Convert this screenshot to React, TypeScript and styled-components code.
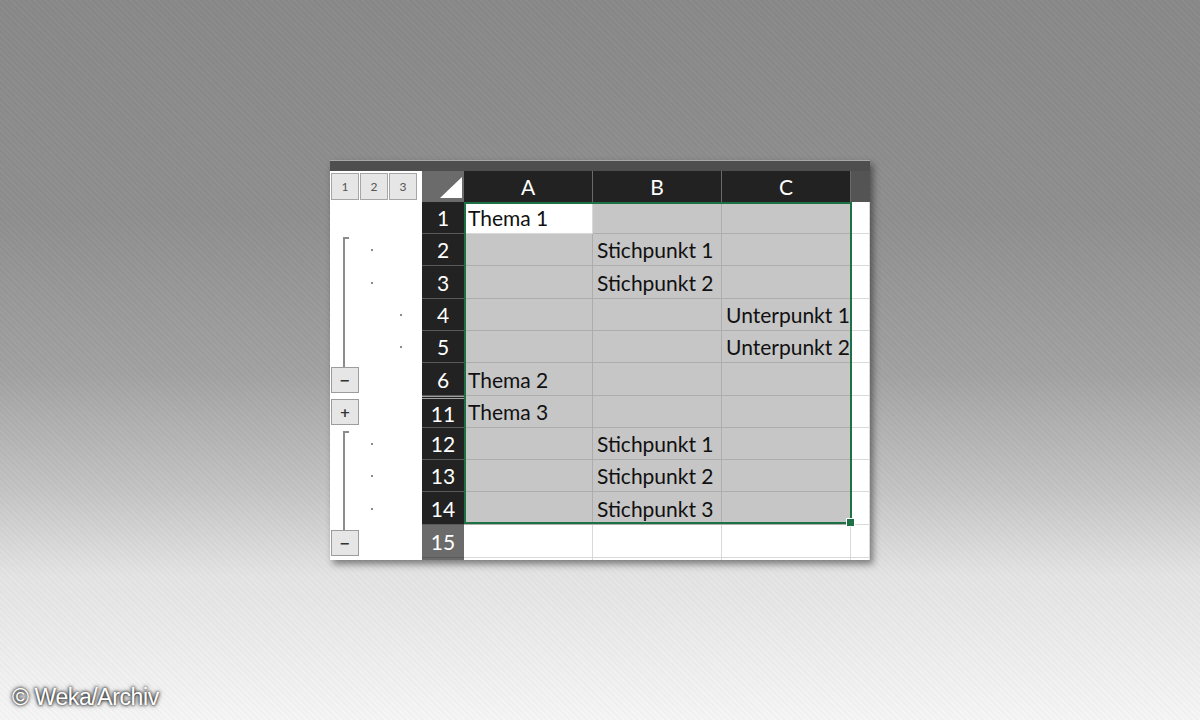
import React from 'react';
import styled, { createGlobalStyle } from 'styled-components';

type Line = 'none' | 'start' | 'full' | 'toButton';

interface SheetRow {
  n: number;
  h: number;
  a?: string;
  b?: string;
  c?: string;
  line: Line;
  dot?: 2 | 3;
  button?: string;
  buttonTop?: number;
  selected: boolean;
  afterHidden?: boolean;
  label?: boolean;
}

const rows: SheetRow[] = [
  { n: 1, h: 32, a: 'Thema 1', line: 'none', selected: true },
  { n: 2, h: 32, b: 'Stichpunkt 1', line: 'start', dot: 2, selected: true },
  { n: 3, h: 33, b: 'Stichpunkt 2', line: 'full', dot: 2, selected: true },
  { n: 4, h: 32, c: 'Unterpunkt 1', line: 'full', dot: 3, selected: true },
  { n: 5, h: 32, c: 'Unterpunkt 2', line: 'full', dot: 3, selected: true },
  { n: 6, h: 33, a: 'Thema 2', line: 'toButton', button: '−', buttonTop: 4, selected: true },
  { n: 11, h: 32, a: 'Thema 3', line: 'none', button: '+', buttonTop: 3, selected: true, afterHidden: true },
  { n: 12, h: 32, b: 'Stichpunkt 1', line: 'start', dot: 2, selected: true },
  { n: 13, h: 32, b: 'Stichpunkt 2', line: 'full', dot: 2, selected: true },
  { n: 14, h: 33, b: 'Stichpunkt 3', line: 'full', dot: 2, selected: true },
  { n: 15, h: 33, line: 'toButton', button: '−', buttonTop: 5, selected: false },
  // only the top edge of row 16 shows under the fold
  { n: 16, h: 33, line: 'none', selected: false, label: false },
];

const App: React.FC = () => {
  return (
    <Page>
      <GlobalStyle />
      <Sheet>
        <TopStrip />
        <HeaderRow>
          <LevelBar>
            <LevelButton>1</LevelButton>
            <LevelButton>2</LevelButton>
            <LevelButton>3</LevelButton>
          </LevelBar>
          <Corner>
            <CornerTriangle />
          </Corner>
          <ColHeader>A</ColHeader>
          <ColHeader>B</ColHeader>
          <ColHeader>C</ColHeader>
          <ColTail />
        </HeaderRow>
        <Body>
          {rows.map(r => (
            <Row key={r.n} $h={r.h}>
              <Outline $line={r.line} $buttonTop={r.buttonTop ?? 0}>
                {r.dot && <Dot $level={r.dot} />}
                {r.button && <OutlineButton $top={r.buttonTop ?? 0}>{r.button}</OutlineButton>}
              </Outline>
              <RowHeader $active={r.selected} $afterHidden={!!r.afterHidden}>
                {r.label === false ? null : r.n}
              </RowHeader>
              <Cell $selected={r.selected && r.n !== 1}>{r.a}</Cell>
              <Cell $selected={r.selected}>{r.b}</Cell>
              <Cell $selected={r.selected}>{r.c}</Cell>
              <Cell $selected={false} $tail />
            </Row>
          ))}
          <Selection>
            <FillHandle />
          </Selection>
        </Body>
      </Sheet>
      <Credit>© Weka/Archiv</Credit>
    </Page>
  );
};

const GlobalStyle = createGlobalStyle`
  html, body {
    margin: 0;
    padding: 0;
  }
  body {
    font-family: Lato, "Noto Sans", sans-serif;
  }
`;

const Page = styled.div`
  position: relative;
  width: 1200px;
  height: 720px;
  overflow: hidden;
  display: flex;
  align-items: center;
  justify-content: center;
  background:
    repeating-linear-gradient(45deg, rgba(255, 255, 255, 0.02) 0 2px, rgba(0, 0, 0, 0.02) 2px 4px),
    linear-gradient(180deg, #898989 0%, #8f8f8f 30%, #a2a2a2 52%, #c4c4c4 68%, #e4e4e4 80%, #f6f6f6 100%);
`;

const Sheet = styled.div`
  width: 540px;
  height: 400px;
  overflow: hidden;
  background: #ffffff;
  display: flex;
  flex-direction: column;
  box-shadow: 3px 4px 7px rgba(0, 0, 0, 0.45);
`;

const TopStrip = styled.div`
  height: 11px;
  flex-shrink: 0;
  background: #4e4e4e;
  border-top: 1px solid #a8a8a8;
  box-sizing: border-box;
`;

const HeaderRow = styled.div`
  display: flex;
  height: 31px;
  flex-shrink: 0;
`;

const LevelBar = styled.div`
  width: 92px;
  display: flex;
  gap: 1px;
  padding: 2px 0 2px 1px;
  box-sizing: border-box;
  background: #ffffff;
`;

const LevelButton = styled.div`
  width: 28px;
  height: 27px;
  box-sizing: border-box;
  border: 1px solid #a6a6a6;
  background: #e6e6e6;
  color: #555555;
  font-size: 12px;
  display: flex;
  align-items: center;
  justify-content: center;
`;

const Corner = styled.div`
  position: relative;
  width: 42px;
  background: #6b6b6b;
`;

const CornerTriangle = styled.div`
  position: absolute;
  right: 2px;
  bottom: 4px;
  width: 22px;
  height: 21px;
  background: #ffffff;
  clip-path: polygon(100% 0, 100% 100%, 0 100%);
`;

const ColHeader = styled.div`
  width: 129px;
  box-sizing: border-box;
  background: #222222;
  border-right: 1px solid #6a6a6a;
  color: #ffffff;
  font-size: 21px;
  display: flex;
  align-items: center;
  justify-content: center;
`;

const ColTail = styled.div`
  flex: 1;
  background: #545454;
`;

const Body = styled.div`
  position: relative;
  display: flex;
  flex-direction: column;
`;

const Row = styled.div<{ $h: number }>`
  display: flex;
  height: ${p => p.$h}px;
  flex-shrink: 0;
`;

const Outline = styled.div<{ $line: Line; $buttonTop: number }>`
  position: relative;
  width: 92px;
  flex-shrink: 0;
  background: #ffffff;

  &::before {
    content: '';
    position: absolute;
    left: 13px;
    width: 2px;
    background: #8c8c8c;
    display: ${p => (p.$line === 'none' ? 'none' : 'block')};
    top: ${p => (p.$line === 'start' ? 3 : 0)}px;
    ${p => (p.$line === 'toButton' ? `height: ${p.$buttonTop}px;` : 'bottom: 0;')}
  }

  &::after {
    content: '';
    position: absolute;
    left: 13px;
    top: 3px;
    width: 6px;
    height: 2px;
    background: #8c8c8c;
    display: ${p => (p.$line === 'start' ? 'block' : 'none')};
  }
`;

const Dot = styled.span<{ $level: 2 | 3 }>`
  position: absolute;
  left: ${p => (p.$level === 2 ? 41 : 70)}px;
  top: 50%;
  width: 2px;
  height: 2px;
  margin-top: -1px;
  background: #8a8a8a;
`;

const OutlineButton = styled.div<{ $top: number }>`
  position: absolute;
  left: 1px;
  top: ${p => p.$top}px;
  width: 28px;
  height: 26px;
  box-sizing: border-box;
  border: 1px solid #9c9c9c;
  background: #e6e6e6;
  color: #333333;
  font-family: "DejaVu Sans", sans-serif;
  font-size: 13px;
  font-weight: bold;
  display: flex;
  align-items: center;
  justify-content: center;
`;

const RowHeader = styled.div<{ $active: boolean; $afterHidden: boolean }>`
  width: 42px;
  flex-shrink: 0;
  box-sizing: border-box;
  background: ${p => (p.$active ? '#222222' : '#6b6b6b')};
  border-bottom: 1px solid #5a5a5a;
  border-top: ${p => (p.$afterHidden ? '3px double #a0a0a0' : 'none')};
  color: #ffffff;
  font-size: 21px;
  display: flex;
  align-items: center;
  justify-content: center;
`;

const Cell = styled.div<{ $selected: boolean; $tail?: boolean }>`
  width: ${p => (p.$tail ? '19px' : '129px')};
  flex-shrink: 0;
  box-sizing: border-box;
  padding-left: 4px;
  background: ${p => (p.$selected ? '#c6c6c6' : '#ffffff')};
  border-right: 1px solid ${p => (p.$selected ? '#adadad' : '#d9d9d9')};
  border-bottom: 1px solid ${p => (p.$selected ? '#adadad' : '#d9d9d9')};
  color: #111111;
  font-size: 21px;
  white-space: nowrap;
  overflow: hidden;
  display: flex;
  align-items: center;
`;

// green frame around A1:C14
const Selection = styled.div`
  position: absolute;
  left: 134px;
  top: 0;
  width: 388px;
  height: 322px;
  box-sizing: border-box;
  border: 2px solid #1d7145;
  pointer-events: none;
`;

const FillHandle = styled.div`
  position: absolute;
  right: -5px;
  bottom: -5px;
  width: 7px;
  height: 7px;
  background: #1d7145;
  border: 1px solid #ffffff;
`;

const Credit = styled.div`
  position: absolute;
  left: 12px;
  bottom: 9px;
  color: #ffffff;
  font-family: "Liberation Sans", Arial, sans-serif;
  font-size: 23px;
  letter-spacing: -0.4px;
  text-shadow: 0 0 3px #000000, 0 0 5px rgba(0, 0, 0, 0.8);
`;

export default App;
